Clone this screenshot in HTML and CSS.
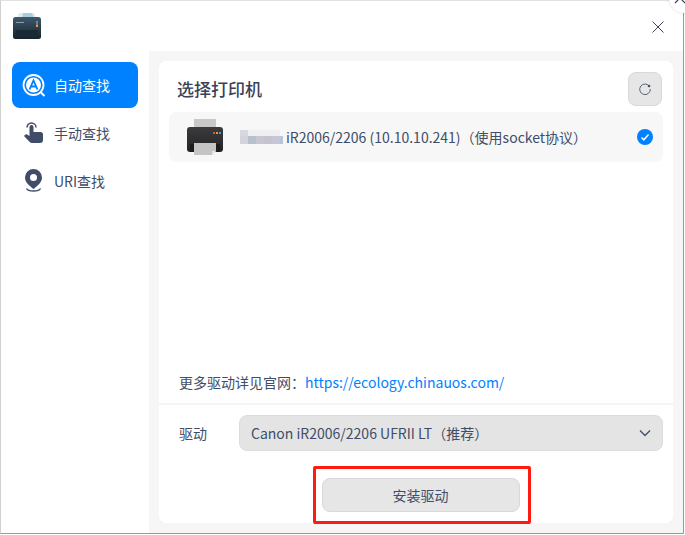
FILE: index.html
```html
<!DOCTYPE html>
<html lang="zh">
<head>
<meta charset="utf-8">
<title>添加打印机</title>
<link rel="stylesheet" href="styles.css">
</head>
<body>
<div class="window">
  <header class="titlebar">
    <svg class="app-icon" width="28" height="26" viewBox="0 0 28 26">
      <defs>
        <linearGradient id="ab" x1="0" y1="0" x2="0" y2="1"><stop offset="0" stop-color="#3f5a6a"/><stop offset="1" stop-color="#14222c"/></linearGradient>
      </defs>
      <path d="M6 0h15l3 5H4z" fill="#dfecf0"/>
      <path d="M10 0h9l2 5H9z" fill="#a9cfdf"/>
      <rect x="0" y="4" width="28" height="22" rx="2.500" fill="url(#ab)"/>
      <rect x="3" y="17" width="22" height="7" fill="#1a2a34"/>
      <rect x="23" y="8" width="2" height="2" fill="#4a90c0"/>
      <rect x="23" y="10" width="2" height="2" fill="#c55"/>
      <rect x="23" y="12" width="2" height="2" fill="#d9a441"/>
      <rect x="3" y="9" width="8" height="1" fill="#8aa0ac"/>
    </svg>
    <svg class="close" width="12" height="12" viewBox="0 0 12 12"><path d="M.5.5l11 11M11.500.5l-11 11" stroke="#3a4257" stroke-width="1" fill="none"/></svg>
  </header>
  <div class="body">
    <nav class="sidebar">
      <a class="nav-item active">
        <svg width="24" height="24" viewBox="0 0 24 24"><circle cx="11.500" cy="12" r="10" fill="none" stroke="#fff" stroke-width="1.800"/><circle cx="11.500" cy="12" r="7.500" fill="#fff"/><path d="M7.500 16.500l4-9 4 9M9 13.500h5" fill="none" stroke="#0081ff" stroke-width="1.800"/><path d="M19 19.500l3.500 3.500" stroke="#fff" stroke-width="2"/></svg>
        <span>自动查找</span>
      </a>
      <a class="nav-item">
        <svg width="24" height="24" viewBox="0 0 24 24"><path d="M5 6.500a4.500 4.500 0 0 1 9 0" fill="none" stroke="#414d68" stroke-width="1.500"/><path d="M7.500 6a2 2 0 0 1 4 0v5h7a2.500 2.500 0 0 1 2.500 2.500V19a3 3 0 0 1-3 3H10a3 3 0 0 1-2.300-1L2 15l1.200-1.300a1.500 1.500 0 0 1 2-.2L7.500 15z" fill="#414d68"/></svg>
        <span>手动查找</span>
      </a>
      <a class="nav-item">
        <svg width="24" height="24" viewBox="0 0 24 24"><path fill-rule="evenodd" d="M11.500 0a8.500 8.500 0 0 1 8.500 8.500c0 4.500-4 8-8.500 11.500C7 16.500 3 13 3 8.500A8.500 8.500 0 0 1 11.500 0zm0 5a3.500 3.500 0 1 0 0 7 3.500 3.500 0 0 0 0-7z" fill="#414d68"/><path d="M4.500 19.500c1 2 4 2.500 7 2.500s6-.5 7-2.500" fill="none" stroke="#414d68" stroke-width="1.500"/></svg>
        <span>URI查找</span>
      </a>
    </nav>
    <main class="content">
      <section class="card">
        <div class="card-head">
          <h1 class="heading">选择打印机</h1>
          <button class="refresh" type="button" aria-label="刷新">
            <svg width="12" height="12" viewBox="0 0 12 12"><path d="M10.500 3.500A5.300 5.300 0 1 0 11.300 6" fill="none" stroke="#5a6478" stroke-width="1"/><circle cx="10" cy="3" r="1.300" fill="#414d68"/></svg>
          </button>
        </div>
        <div class="printer-row">
          <svg class="printer" width="36" height="36" viewBox="0 0 36 36">
            <defs><linearGradient id="pb" x1="0" y1="0" x2="0" y2="1"><stop offset="0" stop-color="#3b3b3d"/><stop offset="1" stop-color="#232325"/></linearGradient></defs>
            <rect x="7" y="0" width="22" height="9" fill="#c8c8c8"/>
            <rect x="0" y="8" width="36" height="25" rx="3" fill="url(#pb)"/>
            <rect x="3" y="25" width="30" height="8" fill="#1c1c1e"/>
            <path d="M7 24h22v8l-4 4H7z" fill="#c4c4c4"/>
            <path d="M25 36l4-4h-4z" fill="#e6e6e6"/>
            <rect x="26" y="13" width="2" height="2" fill="#d9534f"/>
            <rect x="29" y="13" width="2" height="2" fill="#e0a030"/>
            <rect x="32" y="13" width="2" height="2" fill="#3f9bdc"/>
          </svg>
          <svg class="blur" width="43" height="14" viewBox="0 0 43 14" shape-rendering="crispEdges">
            <rect x="0" y="0" width="8" height="6" fill="#d8d9e0"/>
            <rect x="8" y="0" width="32" height="6" fill="#efeff1"/>
            <rect x="0" y="6" width="8" height="8" fill="#d2d3dc"/>
            <rect x="8" y="6" width="8" height="8" fill="#b9c0cd"/>
            <rect x="16" y="6" width="8" height="8" fill="#c8c6d0"/>
            <rect x="24" y="6" width="8" height="8" fill="#c5c4ce"/>
            <rect x="32" y="6" width="8" height="8" fill="#c5c8d4"/>
            <rect x="40" y="6" width="3" height="8" fill="#b5c5dc"/>
          </svg>
          <span class="printer-name">iR2006/2206 (10.10.10.241)（使用socket协议）</span>
          <svg class="check" width="16" height="16" viewBox="0 0 16 16"><circle cx="8" cy="8" r="8" fill="#0081ff"/><path d="M4.500 8.500l2.300 2.300 4.700-5.300" fill="none" stroke="#fff" stroke-width="1.500"/></svg>
        </div>
        <p class="more">更多驱动详见官网：<a class="link">https://ecology.chinauos.com/</a></p>
        <div class="divider"></div>
        <div class="driver">
          <label class="driver-label">驱动</label>
          <div class="select">
            <span>Canon iR2006/2206 UFRII LT（推荐）</span>
            <svg width="12" height="8" viewBox="0 0 12 8"><path d="M1 1.500l5 5 5-5" fill="none" stroke="#414d68" stroke-width="1.300"/></svg>
          </div>
        </div>
        <div class="actions"><button class="install" type="button">安装驱动</button></div>
      </section>
    </main>
  </div>
  <div class="annotation"></div>
</div>
<div class="outer-close"><svg width="12" height="12" viewBox="0 0 12 12"><path d="M1 1l10 10M11 1L1 11" stroke="#3a4257" stroke-width="1.200" fill="none"/></svg></div>
</body>
</html>
```
FILE: styles.css
```css
* { box-sizing: border-box; }
html, body { margin: 0; padding: 0; height: 100%; background: #fff; overflow: hidden; }
body { position: relative; font-family: "Noto Sans CJK SC", "Noto Sans", sans-serif; font-size: 14px; color: #414d68; }
.window {
  position: relative;
  width: 684px;
  height: 534px;
  border-top: 1px solid #e2e2e2;
  border-left: 1px solid #d0d0d0;
  border-right: 1px solid #9a9a9a;
  border-bottom: 1px solid #9a9a9a;
  display: flex;
  flex-direction: column;
  background: #fff;
}
.titlebar { height: 50px; flex: none; display: flex; align-items: center; justify-content: space-between; padding: 0 19px 0 12px; background: #fff; }
.app-icon { display: block; }
.close { display: block; margin-top: 2px; }
.body { flex: 1; display: flex; min-height: 0; background: #f6f6f6; }
.sidebar { width: 148px; flex: none; padding: 11px 11px 0 11px; background: #fff; display: flex; flex-direction: column; gap: 2px; }
.nav-item { height: 46px; display: flex; align-items: center; gap: 8px; padding-left: 10px; border-radius: 8px; color: #414d68; }
.nav-item svg { flex: none; }
.nav-item.active { background: #0081ff; color: #fff; }
.nav-item span { line-height: 20px; }
.content { flex: 1; padding: 10px; min-width: 0; }
.card { height: 100%; background: #fff; border-radius: 8px; display: flex; flex-direction: column; padding: 10px 10px 11px; }
.card-head { display: flex; justify-content: space-between; align-items: center; height: 33px; padding-left: 8px; margin-top: 1px; }
.heading { margin: 0; font-size: 17px; font-weight: 500; color: #3a4257; line-height: 24px; }
.refresh { width: 34px; height: 34px; margin-right: 1px; padding: 0; border: 1px solid #d8d8d8; border-radius: 8px; background: #e6e6e6; display: flex; align-items: center; justify-content: center; }
.refresh svg { display: block; }
.printer-row { margin-top: 7px; height: 50px; flex: none; background: #f7f7f7; border-radius: 8px; display: flex; align-items: center; padding: 0 10px 0 18px; }
.printer { display: block; flex: none; margin-right: 17px; }
.blur { display: block; margin-right: 3px; flex: none; filter: blur(.5px); }
.printer-name { flex: 1; font-size: 14px; color: #414d68; white-space: nowrap; }
.check { display: block; flex: none; }
.more { margin: auto 0 0; padding-left: 10px; font-size: 14px; line-height: 20px; color: #414d68; }
.link { color: #0081ff; }
.divider { height: 2px; margin: 11px -10px 0; background: #f5f5f5; flex: none; }
.driver { display: flex; align-items: center; margin-top: 10px; flex: none; }
.driver-label { width: 70px; padding-left: 10px; flex: none; }
.select { flex: 1; height: 36px; display: flex; align-items: center; justify-content: space-between; padding: 0 11px; background: #e4e4e4; border: 1px solid #dcdcdc; border-radius: 8px; color: #414d68; }
.actions { display: flex; justify-content: center; margin-top: 27px; flex: none; }
.install { width: 198px; height: 34px; padding: 0; margin-left: 9px; border: 1px solid #d8d8d8; border-radius: 8px; background: #e6e6e6; font: inherit; color: #414d68; }
.annotation { position: absolute; left: 312px; top: 465px; width: 218px; height: 58px; border: 3px solid #fe1c12; border-radius: 2px; pointer-events: none; }
.outer-close { position: absolute; left: 669px; top: -17px; width: 30px; height: 30px; border-radius: 50%; background: #fff; box-shadow: 0 0 3px rgba(0,0,0,.15); }
.outer-close svg { position: absolute; left: 5px; top: 9px; }
```
